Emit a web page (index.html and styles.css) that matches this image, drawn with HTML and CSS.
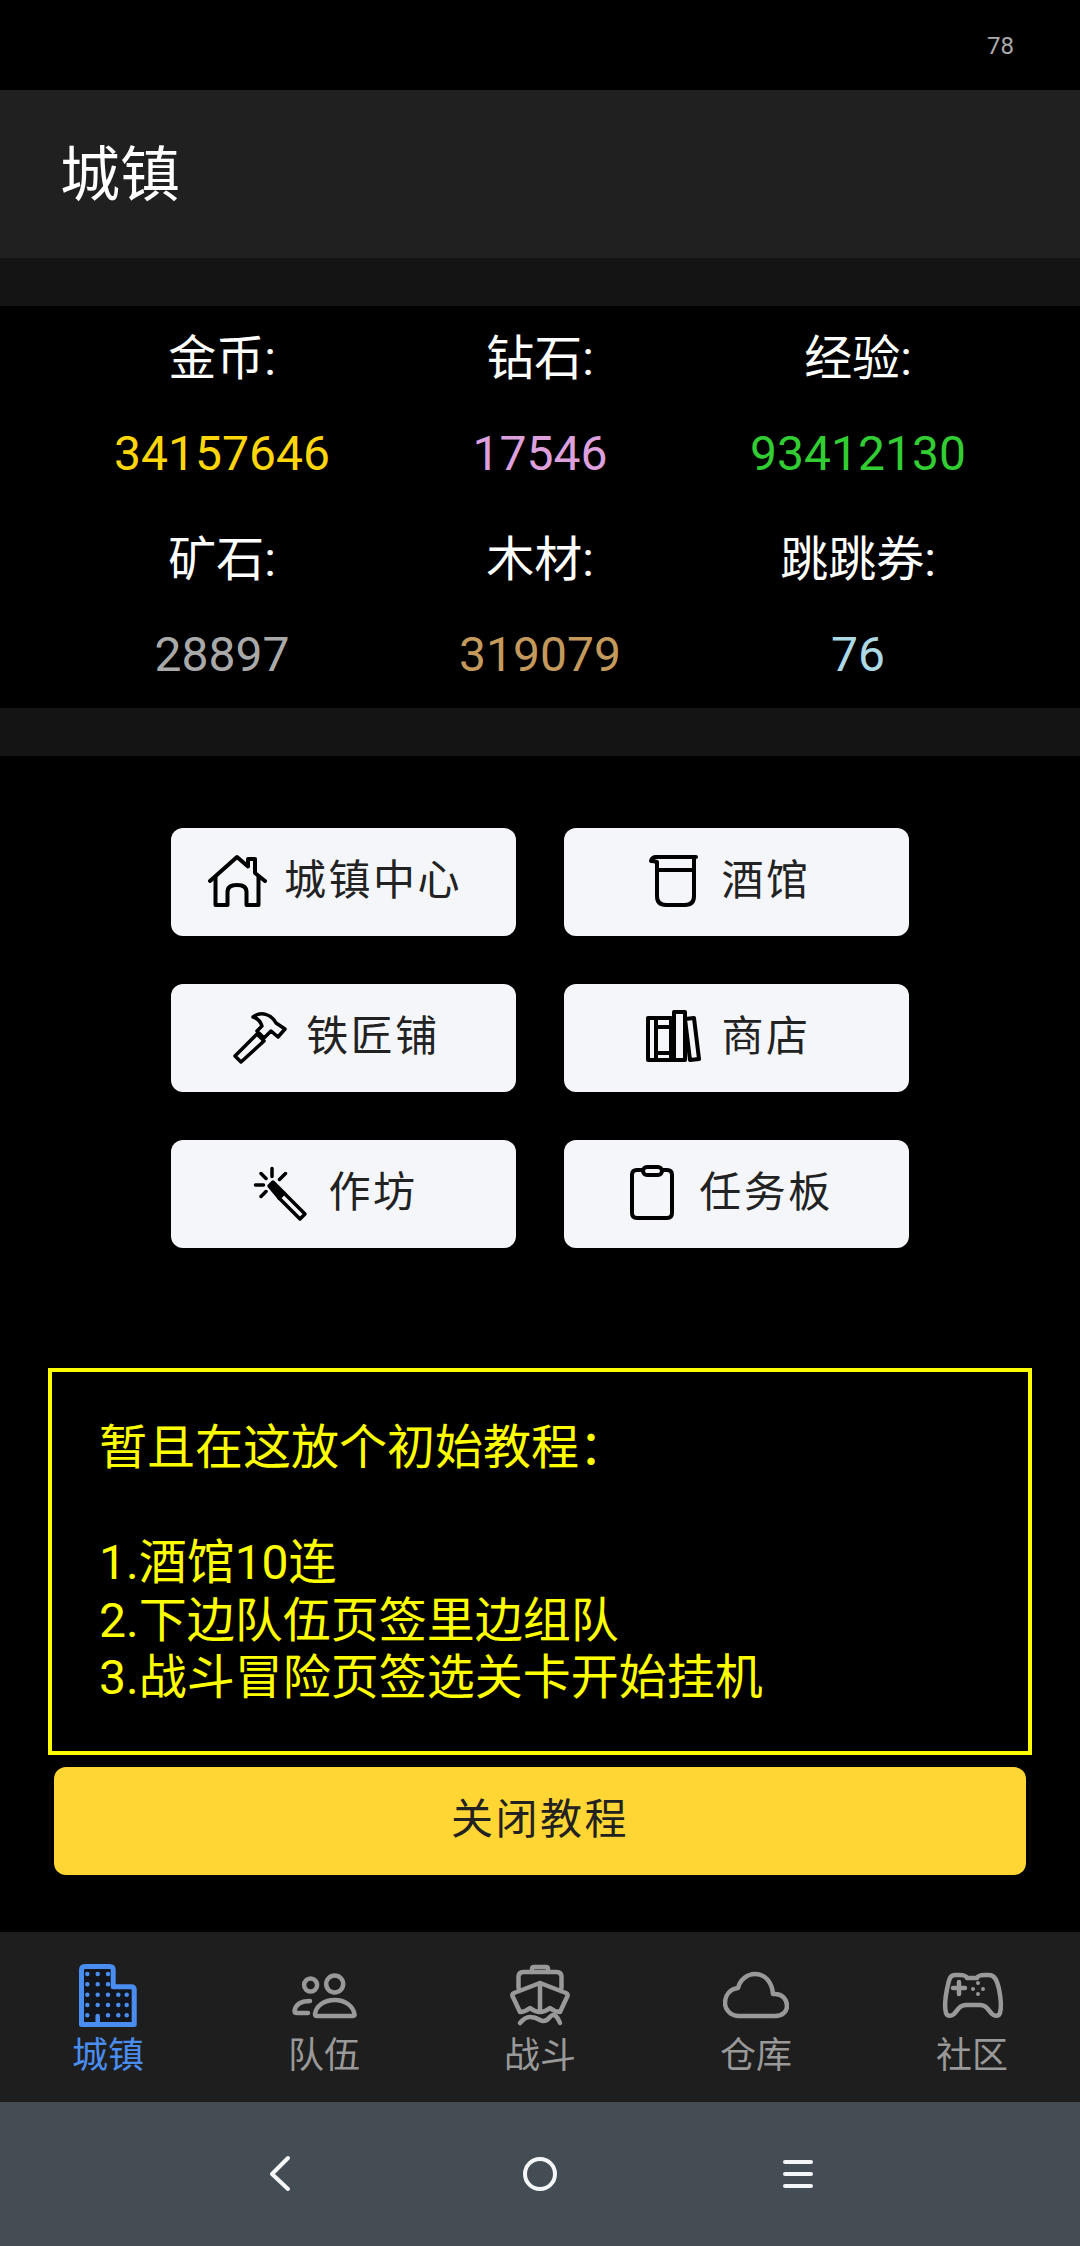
FILE: index.html
```html
<!DOCTYPE html>
<html lang="zh">
    <head>
        <meta charset="UTF-8">
        <title>城镇</title>
        <link rel="stylesheet" href="styles.css">
    </head>
    <body>
      <div id="app">
        <div class="status-bar"><span class="status-num">78</span></div>
        <div class="title-bar">城镇</div>
        <div class="divider"></div>

        <div class="stats">
          <div class="stat"><span class="stat-label">金币:</span><span class="stat-value gold">34157646</span></div>
          <div class="stat"><span class="stat-label">钻石:</span><span class="stat-value plum">17546</span></div>
          <div class="stat"><span class="stat-label">经验:</span><span class="stat-value lime">93412130</span></div>
          <div class="stat"><span class="stat-label">矿石:</span><span class="stat-value grey">28897</span></div>
          <div class="stat"><span class="stat-label">木材:</span><span class="stat-value wood">319079</span></div>
          <div class="stat"><span class="stat-label">跳跳券:</span><span class="stat-value ice">76</span></div>
        </div>
        <div class="divider"></div>

        <div class="town-buttons">
          <button type="button" class="town-btn">
            <svg class="btn-icon" viewBox="0 0 60 60"><path d="M3 29 30 5l11 9.500V7h7v14l10 8"/><path d="M8.500 25v28h12V40q0-7 9.500-7t9.500 7v13h12V25"/></svg>
            <span>城镇中心</span>
          </button>
          <button type="button" class="town-btn">
            <svg class="btn-icon" viewBox="0 0 60 60"><path d="M52 5H12q-4 0-5 4 3 0 6 1v34q0 9 9 9h19q9 0 9-9V5"/><path d="M13 18h37"/></svg>
            <span>酒馆</span>
          </button>
          <button type="button" class="town-btn">
            <svg class="btn-icon thin" viewBox="0 0 60 60"><path d="M6 48 28 26l7 7-23 21z"/><path d="M24 9c8-6 18-3 23 6l9 6-7 8-7-6-7 7-7-7 5-5c-2-6-5-8-9-9z"/></svg>
            <span>铁匠铺</span>
          </button>
          <button type="button" class="town-btn">
            <svg class="btn-icon" viewBox="0 0 60 60"><path d="M4 10h8v42H4zM12 10h15v42H12zM12 19h15M12 45h15M30 4h11v48H30zM41 11l9-1 5 41-9 1z"/></svg>
            <span>商店</span>
          </button>
          <button type="button" class="town-btn">
            <svg class="btn-icon thin" viewBox="0 0 60 60"><path d="M21 4.500v8M4.500 21h8M10 9.500l5 5M34.500 9.500l-6 6M10 32.500l5-5"/><path class="solid" d="M18 22l4-4 11 11-5 5z"/><path d="M28 34l5-5 21 21-5 5z"/></svg>
            <span>作坊</span>
          </button>
          <button type="button" class="town-btn">
            <svg class="btn-icon" viewBox="0 0 60 60"><path d="M21 6h-6q-5 0-5 5v38q0 5 5 5h30q5 0 5-5V11q0-5-5-5h-5"/><rect x="21" y="3" width="19" height="8" rx="4"/></svg>
            <span>任务板</span>
          </button>
        </div>

        <div class="tutorial">暂且在这放个初始教程：<br><br>1.酒馆10连<br>2.下边队伍页签里边组队<br>3.战斗冒险页签选关卡开始挂机</div>
        <button type="button" class="close-btn">关闭教程</button>
      </div>

      <nav class="tab-bar">
        <div class="tab active">
          <svg class="tab-icon" viewBox="0 0 66 66">
            <path class="city" d="M6.500 62.500V8q0-3.500 3.500-3.500h24.700q3.500 0 3.500 3.500v16.800h18q3 0 3 3v34.700z"/>
            <path class="dots" d="M12.300 12h0M22.700 12h0M33 12h0M12.300 22.300h0M22.700 22.300h0M33 22.300h0M12.300 32.700h0M22.700 32.700h0M33 32.700h0M12.300 43h0M22.700 43h0M33 43h0M12.300 53.300h0M33 53.300h0M43.300 32.700h0M51.700 32.700h0M43.300 43h0M51.700 43h0M43.300 53.300h0M51.700 53.300h0M22.700 54v8"/>
          </svg>
          <span>城镇</span>
        </div>
        <div class="tab">
          <svg class="tab-icon" viewBox="0 0 66 66"><circle cx="19.600" cy="23" r="6.500"/><circle cx="43.700" cy="22" r="8.500"/><path d="M19 39Q5 39 3.500 49q0 2 2.500 2h11"/><path d="M43.800 38C33 38 25 44 24 52q0 2 2 2h36q2 0 1.500-2C62 44 54 38 43.800 38z"/></svg>
          <span>队伍</span>
        </div>
        <div class="tab">
          <svg class="tab-icon" viewBox="0 0 66 66"><path d="M25 10V7q0-2 2-2h12q2 0 2 2v3"/><path d="M11.500 26V15q0-5 5-5h33q5 0 5 5v11"/><path d="M33 21 7 31q-2 1-1.500 3L13 50q5 0 10-4 5 4 10 4t10-4q5 4 10 4l7.500-16q.5-2-1.500-3z"/><path d="M33 21v28"/><path d="M13 61q5-6 10-6t10 3 10-3 10 6"/></svg>
          <span>战斗</span>
        </div>
        <div class="tab">
          <svg class="tab-icon" viewBox="0 0 66 66"><path d="M16 54h36c8 0 12-5 12-10 0-7-5-12-12-12h-2C49 20 42 12 32 12c-8 0-15 6-17 14C7 27 2 33 2 41c0 7 6 13 14 13z"/></svg>
          <span>仓库</span>
        </div>
        <div class="tab">
          <svg class="tab-icon" viewBox="0 0 66 66"><path d="M16 13h4q7 0 8 3h10q1-3 8-3h4c6 0 8 6 10 14 2 10 3 17 1 24-1 3-5 4-8 1l-5-6q-3-3-7-3H27q-4 0-7 3l-5 6c-3 3-7 2-8-1-2-7-1-14 1-24 2-8 2-14 8-14z"/><path d="M14 26h12M20 20v12"/><path class="dots" d="M34 27h0M44 27h0M39 21h0M39 32h0"/></svg>
          <span>社区</span>
        </div>
      </nav>

      <div class="sys-nav">
        <svg class="sys-icon" viewBox="0 0 40 40"><path d="M26 4 10 20l16 15"/></svg>
        <svg class="sys-icon" viewBox="0 0 40 40"><circle cx="20" cy="20" r="15"/></svg>
        <svg class="sys-icon" viewBox="0 0 40 40"><path d="M7 8h26M7 20h26M7 32h26"/></svg>
      </div>
    </body>
</html>
```

FILE: styles.css
```css
* { box-sizing: border-box; }

body {
    background: #000;
    color: #fff;
    font-family: Roboto, "Noto Sans CJK SC", sans-serif;
    margin: 0;
    padding: 0;
    width: 1080px;
    height: 2246px;
    display: flex;
    flex-direction: column;
    overflow: hidden;
}

#app { flex: 1; }

.status-bar {
    height: 90px;
    display: flex;
    align-items: center;
    justify-content: flex-end;
    padding: 2px 66px 0 0;
}

.status-num { font-size: 24px; color: #aaa; }

.title-bar {
    height: 168px;
    background: #202020;
    font-size: 60px;
    line-height: 172px;
    padding-left: 60px;
}

.divider { height: 48px; background: #141414; }

.stats {
    display: grid;
    grid-template-columns: repeat(3, 318px);
    grid-auto-rows: 201px;
    padding: 0 63px;
}

.stat {
    display: flex;
    flex-direction: column;
    align-items: center;
    padding-top: 25px;
    gap: 39px;
    font-size: 48px;
    line-height: 56px;
}

.gold { color: #ffd60a; }
.plum { color: #dda0dd; }
.lime { color: #32cd32; }
.grey { color: #a9a9a9; }
.wood { color: #c49a5c; }
.ice { color: #add8e6; }

.town-buttons {
    display: grid;
    grid-template-columns: 345px 345px;
    grid-auto-rows: 108px;
    gap: 48px;
    justify-content: center;
    padding-top: 72px;
}

.town-btn {
    display: flex;
    align-items: center;
    justify-content: center;
    gap: 17px;
    padding: 0 18px 0 0;
    background: #f4f6fa;
    color: #222;
    border: 0;
    border-radius: 12px;
    font-family: inherit;
    font-size: 42px;
    letter-spacing: 2.500px;
}

.town-btn span { padding-bottom: 11px; }

.btn-icon { width: 60px; height: 60px; fill: none; stroke: #000; stroke-width: 4; stroke-linejoin: round; stroke-linecap: round; }
.btn-icon.thin { stroke-width: 3.500; }
.btn-icon .solid { fill: #000; }

.tutorial {
    margin: 120px 48px 0;
    height: 387px;
    padding: 47px;
    border: 4px solid #ffff00;
    color: #ffff00;
    font-size: 48px;
    line-height: 57.600px;
}

.close-btn {
    display: block;
    width: 972px;
    height: 108px;
    margin: 12px 54px 0;
    padding: 0 0 11px;
    background: #ffd633;
    color: #222;
    border: 0;
    border-radius: 12px;
    font-family: inherit;
    font-size: 42px;
    letter-spacing: 2.500px;
}

.tab-bar {
    height: 170px;
    background: #1e1e1e;
    display: grid;
    grid-template-columns: repeat(5, 216px);
    padding-top: 30px;
}

.tab {
    display: flex;
    flex-direction: column;
    align-items: center;
    color: #999;
    font-size: 36px;
    line-height: 44px;
    gap: 6px;
}

.tab.active { color: #4a8df0; }

.tab-icon { width: 66px; height: 66px; fill: none; stroke: #999; stroke-width: 4.500; stroke-linejoin: round; stroke-linecap: round; }
.tab-icon .dots { stroke-width: 4; }
.tab-icon .city { fill: #12161c; stroke: #4a8df0; stroke-width: 5; }
.tab.active .dots { stroke: #4a8df0; stroke-width: 4.500; }

.sys-nav {
    height: 144px;
    background: #454d54;
    display: grid;
    grid-template-columns: 40px 40px 40px;
    justify-content: center;
    column-gap: 218px;
    align-items: center;
}

.sys-icon { width: 40px; height: 40px; fill: none; stroke: #f4f6f8; stroke-width: 4; stroke-linecap: round; stroke-linejoin: round; }
```
